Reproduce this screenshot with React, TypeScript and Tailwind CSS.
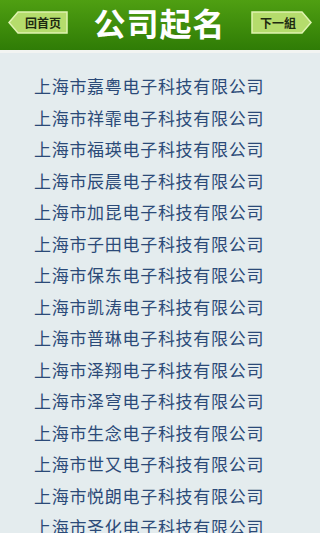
import React from 'react';

const names = [
  '嘉粤', '祥霏', '福瑛', '辰晨', '加昆', '子田', '保东', '凯涛',
  '普琳', '泽翔', '泽穹', '生念', '世又', '悦朗', '圣化',
];

function BackButton() {
  return (
    <svg width="60" height="23" viewBox="0 0 60 23" className="block">
      <path d="M10 1 H59 V22 H10 L1 11.5 Z" fill="#b5dc6c" stroke="#dff3b0" strokeWidth="1.5" />
      <text x="35" y="16.5" textAnchor="middle" fontSize="12" fontWeight="700" fill="#1e2a10" fontFamily="'Noto Sans CJK SC', sans-serif">回首页</text>
    </svg>
  );
}

function NextButton() {
  return (
    <svg width="61" height="23" viewBox="0 0 61 23" className="block">
      <path d="M1 1 H51 L60 11.5 L51 22 H1 Z" fill="#b5dc6c" stroke="#dff3b0" strokeWidth="1.5" />
      <text x="27" y="16.5" textAnchor="middle" fontSize="12" fontWeight="700" fill="#1e2a10" fontFamily="'Noto Sans CJK SC', sans-serif">下一組</text>
    </svg>
  );
}

export default function App() {
  return (
    <div className="w-[320px] h-[533px] overflow-hidden bg-[#e4ecee] font-['Noto_Sans_CJK_SC',sans-serif]">
      <header className="h-[50px] bg-gradient-to-b from-[#4f9f12] to-[#2f7c06] flex items-center justify-between px-[8px]">
        <div className="self-start mt-[11px]">
          <BackButton />
        </div>
        <h1 className="text-white text-[32px] font-bold leading-none tracking-[1px] -mt-[6px]">公司起名</h1>
        <div className="self-start mt-[11px]">
          <NextButton />
        </div>
      </header>
      <div className="h-[3px] bg-[#f2f4f2]" />
      <ul className="pt-[17px] pl-[34px] flex flex-col">
        {names.map((n) => (
          <li key={n} className="h-[31.5px] leading-[31.5px] text-[17px] tracking-[0.7px] text-[#2b4a78] whitespace-nowrap">
            上海市{n}电子科技有限公司
          </li>
        ))}
      </ul>
    </div>
  );
}
